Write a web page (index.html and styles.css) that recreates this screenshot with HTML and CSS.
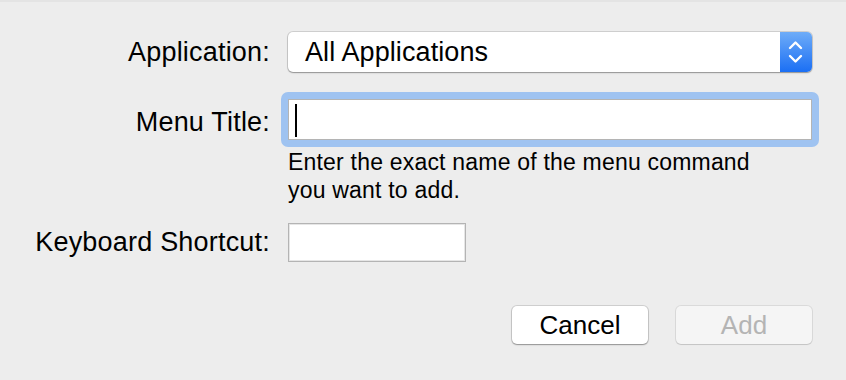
FILE: index.html
```html
<!DOCTYPE html>
<html lang="en">
<head>
  <meta charset="UTF-8" />
  <title>Add Keyboard Shortcut</title>
  <link rel="stylesheet" href="styles.css">
</head>
<body>
  <div class="sheet">
    <div class="row">
      <label class="label">Application:</label>
      <div class="popup">
        <span class="popup-text">All Applications</span>
        <span class="popup-arrows">
          <svg width="32" height="40" viewBox="0 0 32 40">
            <path d="M10 16 L15.5 10.5 L21 16" fill="none" stroke="#fff" stroke-width="2.4" stroke-linecap="round" stroke-linejoin="round"/>
            <path d="M10 24 L15.5 29.5 L21 24" fill="none" stroke="#fff" stroke-width="2.4" stroke-linecap="round" stroke-linejoin="round"/>
          </svg>
        </span>
      </div>
    </div>

    <div class="row row-title">
      <label class="label label-title">Menu Title:</label>
      <div class="focus-ring">
        <div class="field field-wide"><span class="caret"></span></div>
      </div>
    </div>

    <p class="help">Enter the exact name of the menu command<br>you want to add.</p>

    <div class="row row-shortcut">
      <label class="label">Keyboard Shortcut:</label>
      <div class="field field-short"></div>
    </div>

    <div class="actions">
      <button class="btn">Cancel</button>
      <button class="btn btn-disabled" disabled>Add</button>
    </div>
  </div>
</body>
</html>
```

FILE: styles.css
```css
body {
  margin: 0;
  background: #ededed;
  font-family: "Liberation Sans", Arial, sans-serif;
  color: #111;
}

.sheet {
  border-top: 2px solid #e4e4e4;
  height: 378px;
  padding: 30px 34px 0 0;
  box-sizing: border-box;
}

.row {
  display: flex;
  align-items: center;
}

.label {
  width: 270px;
  margin-right: 18px;
  text-align: right;
  font-size: 27px;
  letter-spacing: 0.2px;
  color: #000;
  flex-shrink: 0;
}

.popup {
  flex: 1;
  height: 40px;
  display: flex;
  align-items: center;
  background: #fff;
  border-radius: 5px;
  box-shadow: 0 0 0 1px rgba(0,0,0,0.12), 0 1px 1.5px rgba(0,0,0,0.3);
  overflow: hidden;
}

.popup-text {
  flex: 1;
  padding-left: 17px;
  font-size: 27px;
  letter-spacing: 0.1px;
  color: #000;
}

.popup-arrows {
  width: 32px;
  height: 40px;
  background: linear-gradient(#6eacf8, #1b6ff4);
}

.popup-arrows svg {
  display: block;
}

.row-title {
  margin-top: 27px;
}

.label-title {
  padding-top: 5px;
}

.focus-ring {
  flex: 1;
  margin: -7px;
  padding: 7px;
  background: #9fc3f1;
  border-radius: 7px;
}

.field {
  background: #fff;
  border: 1px solid #b4b4b4;
  box-sizing: border-box;
}

.field-wide {
  height: 41px;
  padding: 4px 0 0 6px;
}

.caret {
  display: block;
  width: 2px;
  height: 33px;
  background: #000;
}

.field-short {
  width: 178px;
  height: 39px;
  box-shadow: inset 0 0 0 1px #e6e6e6;
}

.help {
  margin: 8px 0 0 288px;
  font-size: 23px;
  letter-spacing: 0.2px;
  line-height: 28px;
  color: #000;
}

.row-shortcut {
  margin-top: 19px;
}

.actions {
  display: flex;
  justify-content: flex-end;
  gap: 28px;
  margin-top: 44px;
}

.btn {
  width: 136px;
  height: 38px;
  border: none;
  border-radius: 5px;
  background: #fff;
  font-family: "Liberation Sans", Arial, sans-serif;
  font-size: 26px;
  color: #000;
  box-shadow: 0 0 0 1px rgba(0,0,0,0.12), 0 1px 1.5px rgba(0,0,0,0.3);
  padding: 0;
}

.btn-disabled {
  background: #f5f5f5;
  color: #b4b4b4;
  box-shadow: 0 0 0 1px rgba(0,0,0,0.08), 0 1px 1px rgba(0,0,0,0.1);
}
```
